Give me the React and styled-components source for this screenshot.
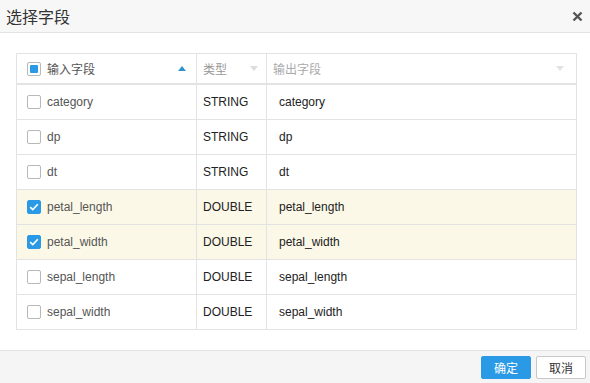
import React, { useState } from 'react';
import styled, { createGlobalStyle } from 'styled-components';

const GlobalStyle = createGlobalStyle`
  html, body {
    margin: 0;
    padding: 0;
    background: #fff;
  }
  body {
    font-family: "Liberation Sans", "Noto Sans CJK SC", sans-serif;
    font-size: 12px;
  }
`;

const Modal = styled.div`
  width: 590px;
  height: 383px;
  display: flex;
  flex-direction: column;
  background: #fff;
`;

const Header = styled.div`
  height: 32px;
  display: flex;
  align-items: center;
  justify-content: space-between;
  padding: 0 6px;
  background: #f7f7f7;
  border-bottom: 1px solid #e3e3e3;
`;

const Title = styled.h3`
  margin: 0;
  font-size: 16px;
  font-weight: normal;
  color: #333;
  font-family: "Noto Sans CJK SC", sans-serif;
`;

const Close = styled.button`
  border: none;
  background: none;
  padding: 0;
  width: 14px;
  height: 14px;
  display: flex;
  align-items: center;
  justify-content: center;
  cursor: pointer;
`;

const Body = styled.div`
  flex: 1;
  padding: 20px 14px 0 16px;
`;

const Table = styled.table`
  width: 560px;
  border-collapse: collapse;
  table-layout: fixed;
  border: 1px solid #e3e3e3;
`;

const Th = styled.th`
  height: 29px;
  padding: 0 0 0 ${p => p.$pad || 6}px;
  text-align: left;
  font-weight: normal;
  color: ${p => p.$color || '#999'};
  border: 1px solid #e3e3e3;
  border-bottom: 2px solid #e3e3e3;
  font-family: "Noto Sans CJK SC", sans-serif;
  font-size: 12px;
`;

const HeadInner = styled.div`
  display: flex;
  align-items: center;
  gap: 6px;
  padding-right: ${p => p.$right || 10}px;
`;

const Grow = styled.span`
  flex: 1;
`;

const Row = styled.tr`
  background: ${p => (p.$selected ? '#fcf8e8' : '#fff')};
`;

const Td = styled.td`
  height: 34px;
  padding: 0 0 0 ${p => p.$pad || 6}px;
  border: 1px solid #e3e3e3;
  color: ${p => p.$color || '#222'};
  white-space: nowrap;
`;

const CellInner = styled.div`
  display: flex;
  align-items: center;
  gap: 6px;
`;

const Box = styled.span`
  box-sizing: border-box;
  width: 14px;
  height: 14px;
  border-radius: 2px;
  border: 1px solid ${p => (p.$checked ? '#2b9ae6' : '#b8b8b8')};
  background: ${p => (p.$checked ? '#2b9ae6' : '#fff')};
  display: flex;
  align-items: center;
  justify-content: center;
  flex-shrink: 0;
`;

const Partial = styled.span`
  width: 8px;
  height: 8px;
  border-radius: 1px;
  background: #2b9ae6;
`;

const Footer = styled.div`
  height: 32px;
  display: flex;
  align-items: center;
  justify-content: flex-end;
  gap: 5px;
  padding: 0 4px 0 0;
  background: #f5f5f5;
  border-top: 1px solid #e3e3e3;
`;

const Button = styled.button`
  box-sizing: border-box;
  width: 50px;
  height: 23px;
  padding: 0;
  border-radius: 2px;
  font-size: 12px;
  font-family: "Noto Sans CJK SC", sans-serif;
  cursor: pointer;
  border: 1px solid ${p => (p.$primary ? '#2b9ae6' : '#c8c8c8')};
  background: ${p => (p.$primary ? '#2b9ae6' : '#fff')};
  color: ${p => (p.$primary ? '#fff' : '#333')};
`;

const Arrow = ({ up, color }) => (
  <svg width="8" height="5" viewBox="0 0 8 5">
    <path d={up ? 'M0 5 L4 0 L8 5 Z' : 'M0 0 L4 5 L8 0 Z'} fill={color} />
  </svg>
);

const Check = () => (
  <svg width="10" height="8" viewBox="0 0 10 8">
    <path d="M1.2 4.2 L3.8 6.6 L8.8 1.2" fill="none" stroke="#fff" strokeWidth="1.6" />
  </svg>
);

const fields = [
  { name: 'category', type: 'STRING', checked: false },
  { name: 'dp', type: 'STRING', checked: false },
  { name: 'dt', type: 'STRING', checked: false },
  { name: 'petal_length', type: 'DOUBLE', checked: true },
  { name: 'petal_width', type: 'DOUBLE', checked: true },
  { name: 'sepal_length', type: 'DOUBLE', checked: false },
  { name: 'sepal_width', type: 'DOUBLE', checked: false },
];

const App = () => {
  const [rows, setRows] = useState(fields);

  const toggle = (i) => {
    setRows(rows.map((r, j) => (j === i ? { ...r, checked: !r.checked } : r)));
  };

  return (
    <>
      <GlobalStyle />
      <Modal>
        <Header>
          <Title>选择字段</Title>
          <Close>
            <svg width="11" height="11" viewBox="0 0 11 11">
              <path d="M1.5 1.5 L9.5 9.5 M9.5 1.5 L1.5 9.5" stroke="#555" strokeWidth="2.4" />
            </svg>
          </Close>
        </Header>
        <Body>
          <Table>
            <colgroup>
              <col style={{ width: 180 }} />
              <col style={{ width: 70 }} />
              <col style={{ width: 310 }} />
            </colgroup>
            <thead>
              <tr>
                <Th $pad={10} $color="#555">
                  <HeadInner>
                    <Box>
                      <Partial />
                    </Box>
                    <Grow>输入字段</Grow>
                    <Arrow up color="#2f93c9" />
                  </HeadInner>
                </Th>
                <Th>
                  <HeadInner $right={8}>
                    <Grow>类型</Grow>
                    <Arrow color="#ddd" />
                  </HeadInner>
                </Th>
                <Th $color="#aaa">
                  <HeadInner $right={12}>
                    <Grow>输出字段</Grow>
                    <Arrow color="#e2e2e2" />
                  </HeadInner>
                </Th>
              </tr>
            </thead>
            <tbody>
              {rows.map((r, i) => (
                <Row key={r.name} $selected={r.checked} onClick={() => toggle(i)}>
                  <Td $pad={10} $color="#555">
                    <CellInner>
                      <Box $checked={r.checked}>{r.checked && <Check />}</Box>
                      {r.name}
                    </CellInner>
                  </Td>
                  <Td>{r.type}</Td>
                  <Td $pad={12}>{r.name}</Td>
                </Row>
              ))}
            </tbody>
          </Table>
        </Body>
        <Footer>
          <Button $primary>确定</Button>
          <Button>取消</Button>
        </Footer>
      </Modal>
    </>
  );
};

export default App;
